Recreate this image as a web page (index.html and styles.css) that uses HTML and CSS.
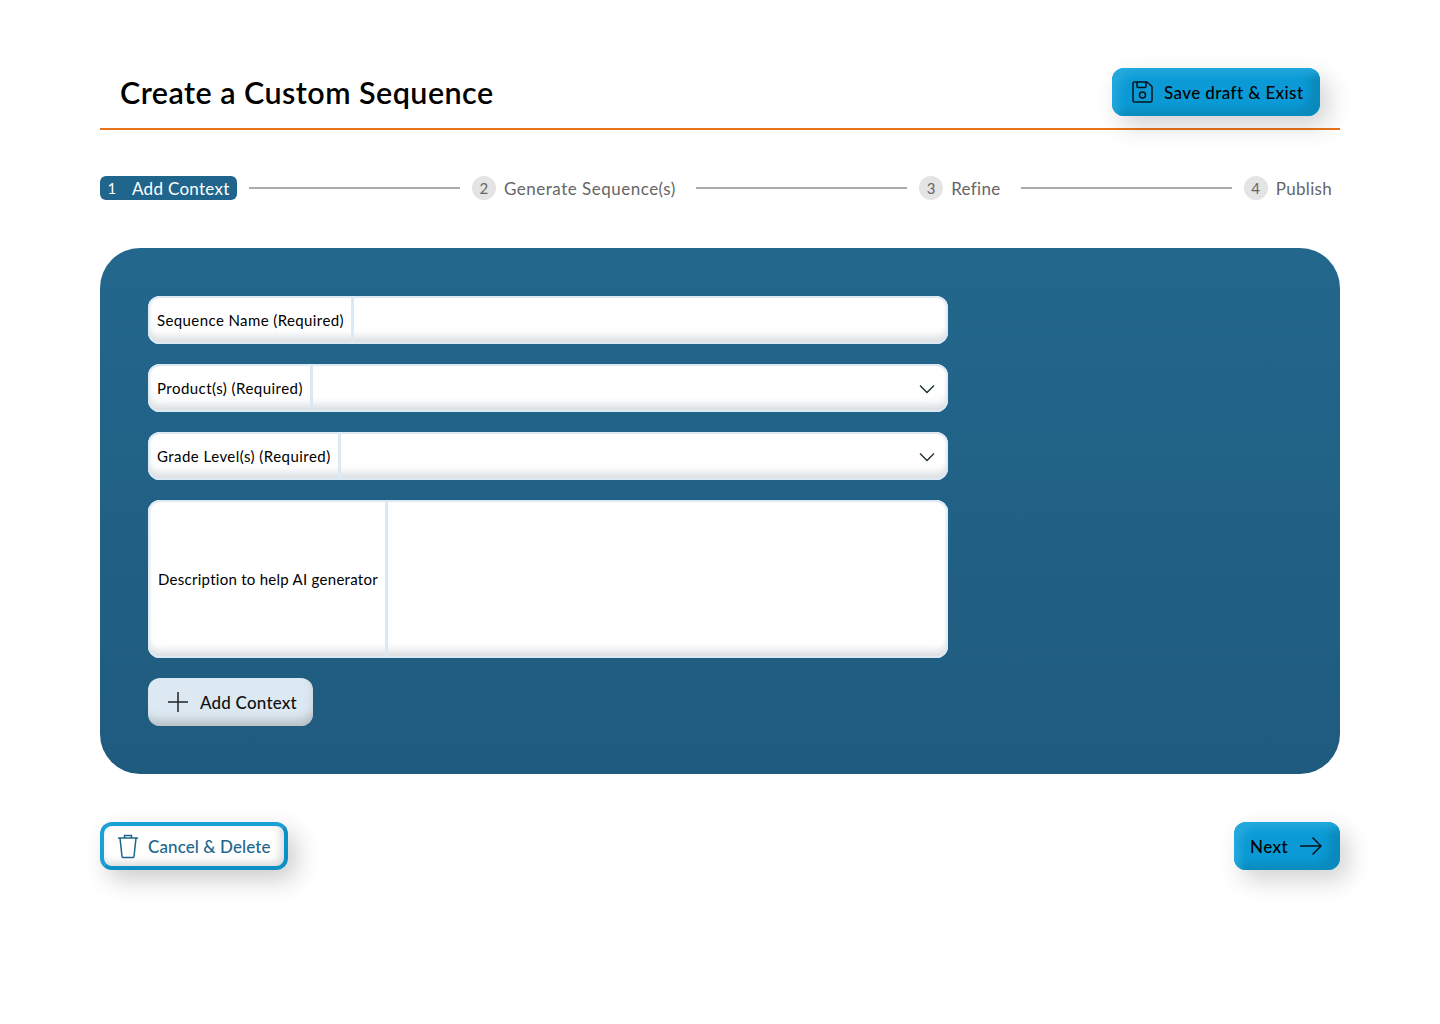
FILE: index.html
```html
<!DOCTYPE html>
<html lang="en">
<head>
<meta charset="utf-8">
<title>Create a Custom Sequence</title>
<link rel="stylesheet" href="styles.css">
</head>
<body>
<main class="page">
  <header class="header">
    <h1 class="title">Create a Custom Sequence</h1>
    <button class="btn btn-primary btn-save" type="button">
      <svg class="icon" width="24" height="24" viewBox="0 0 24 24" fill="none" stroke="#06141c" stroke-width="1.5" stroke-linejoin="round"><path d="M3 3.5A1.5 1.5 0 0 1 4.5 2H17l5 4.500V20.500a1.500 1.500 0 0 1-1.500 1.500H4.500A1.500 1.500 0 0 1 3 20.500Z"/><path d="M7 2v4.500a1 1 0 0 0 1 1h7a1 1 0 0 0 1-1V2"/><circle cx="12.500" cy="15" r="3"/></svg>
      <span class="btn-glow">Save draft &amp; Exist</span>
    </button>
  </header>

  <ol class="stepper">
    <li class="step step-active"><span class="step-num">1</span><span>Add Context</span></li>
    <li class="step-line"></li>
    <li class="step step-long"><span class="step-num">2</span><span>Generate Sequence(s)</span></li>
    <li class="step-line"></li>
    <li class="step"><span class="step-num">3</span><span>Refine</span></li>
    <li class="step-line"></li>
    <li class="step"><span class="step-num">4</span><span>Publish</span></li>
  </ol>

  <section class="panel">
    <div class="field"><label class="field-label">Sequence Name (Required)</label><div class="field-value"></div></div>
    <div class="field"><label class="field-label field-label-wide">Product(s) (Required)</label><div class="field-value"><svg class="chevron" width="16" height="10" viewBox="0 0 16 10" fill="none" stroke="#1a2a33" stroke-width="1.300"><path d="M1 1.500 8 8.500 15 1.500"/></svg></div></div>
    <div class="field"><label class="field-label field-label-wide">Grade Level(s) (Required)</label><div class="field-value"><svg class="chevron" width="16" height="10" viewBox="0 0 16 10" fill="none" stroke="#1a2a33" stroke-width="1.300"><path d="M1 1.500 8 8.500 15 1.500"/></svg></div></div>
    <div class="field field-tall"><label class="field-label field-label-desc">Description to help AI generator</label><div class="field-value"></div></div>
    <button class="btn btn-add" type="button">
      <svg width="22" height="22" viewBox="0 0 22 22" fill="none" stroke="#222" stroke-width="1.500"><path d="M11 1v20M1 11h20"/></svg>
      <span>Add Context</span>
    </button>
  </section>

  <footer class="footer">
    <button class="btn btn-cancel" type="button">
      <svg class="icon" width="24" height="26" viewBox="0 0 24 26" fill="none" stroke="#1f6488" stroke-width="1.500" stroke-linejoin="round"><path d="M2 5h20M8.500 5V2.500h7V5M4 5l2 18.500a1 1 0 0 0 1 1h10a1 1 0 0 0 1-1L20 5"/></svg>
      <span>Cancel &amp; Delete</span>
    </button>
    <button class="btn btn-primary btn-next" type="button">
      <span class="btn-glow next-inner"><span>Next</span>
      <svg width="24" height="20" viewBox="0 0 24 20" fill="none" stroke="#06141c" stroke-width="1.500"><path d="M1 10h21M13.500 1.500 22 10l-8.500 8.500"/></svg></span>
    </button>
  </footer>
</main>
</body>
</html>
```
FILE: styles.css
```css
* { box-sizing: border-box; }
html, body { margin: 0; padding: 0; background: #fff; }
body { font-family: "Lato", "Liberation Sans", sans-serif; color: #000; }
.page { width: 1240px; min-height: 100vh; margin: 0 auto; padding-top: 68px; }

.header {
  display: flex; align-items: center; justify-content: space-between;
  height: 62px; padding: 0 20px 12px; border-bottom: 2px solid #e8731a;
}
.title { margin: 0; font-size: 30.500px; font-weight: 600; letter-spacing: 0.45px; line-height: 46px; }

.btn {
  display: inline-flex; align-items: center; height: 48px; border: 0; border-radius: 12px;
  font: 500 17px "Lato", "Liberation Sans", sans-serif; letter-spacing: 0.4px; cursor: pointer; padding: 0;
}
.btn-primary {
  background: #0b9ad5; color: #000;
  box-shadow: 8px 10px 24px rgba(0, 0, 0, .18), inset 12px 12px 8px -6px #24a9dd, inset -16px -12px 8px -6px #0a8abd;
}
.btn-save { width: 208px; padding-left: 18px; gap: 10px; }
.btn-glow { white-space: nowrap; }
.icon { flex: none; }

.stepper {
  list-style: none; display: flex; align-items: center; margin: 46px 0 0; padding: 0 8px 0 0;
  height: 24px; font-size: 17px; letter-spacing: 0.3px; color: #666;
}
.step { display: flex; align-items: center; gap: 8px; white-space: nowrap; }
.step-long { letter-spacing: 0.5px; }
.step-num {
  width: 24px; height: 24px; border-radius: 50%; background: #e4e4e4; font-size: 15px;
  display: flex; align-items: center; justify-content: center;
}
.step-line { flex: 1 1 0; height: 2px; background: #aaa; margin: 0 12px 0 20px; }
.step-active + .step-line { margin-left: 12px; }
.step-active { background: #20668c; color: #fff; border-radius: 6px; height: 24px; padding: 0 7px 0 0; }
.step-active .step-num { background: none; }

.panel {
  margin-top: 48px; height: 526px; padding: 48px; border-radius: 40px;
  background: linear-gradient(180deg, #23678d, #1f5b7e);
  display: flex; flex-direction: column; align-items: flex-start; gap: 20px;
}
.field {
  display: flex; width: 800px; height: 48px; padding: 2px 0; background: #fff; border-radius: 12px; overflow: hidden;
  box-shadow: inset 0 2px 0 #dce9f2, inset 2px 0 3px #dce9f2, inset -2px 0 3px #dce9f2, inset 0 -2px 0 #dce9f2, inset 0 -12px 8px -5px rgba(190, 195, 200, .6);
  font-size: 15px;
}
.field-tall { height: 158px; }
.field-label {
  display: flex; align-items: center; padding: 0 7px 0 9px; white-space: nowrap;
  border-right: 3px solid #dce9f2; letter-spacing: 0.4px;
}
.field-label-wide { letter-spacing: 0.46px; }
.field-label-desc { padding-left: 10px; letter-spacing: 0.27px; }
.field-value { flex: 1; display: flex; align-items: center; justify-content: flex-end; padding: 2px 13px 0 0; }
.chevron { display: block; }

.btn-add {
  width: 165px; padding-left: 19px; gap: 11px; background: #dce9f2; color: #111; letter-spacing: 0.2px;
  box-shadow: inset -3px -10px 8px -4px rgba(170, 175, 180, .7);
}
.footer { display: flex; justify-content: space-between; margin-top: 48px; }
.btn-cancel {
  width: 188px; padding-left: 12px; gap: 8px; background: #fff; color: #20668c; letter-spacing: 0.1px;
  border: 4px solid #1a9fd6; border-bottom-color: #0d90c6; border-right-color: #0d90c6;
  box-shadow: 8px 10px 24px rgba(0, 0, 0, .2), inset -3px -3px 8px rgba(0, 0, 0, .16);
}
.btn-next { width: 106px; padding-left: 16px; }
.next-inner { display: flex; align-items: center; gap: 11px; }
```
